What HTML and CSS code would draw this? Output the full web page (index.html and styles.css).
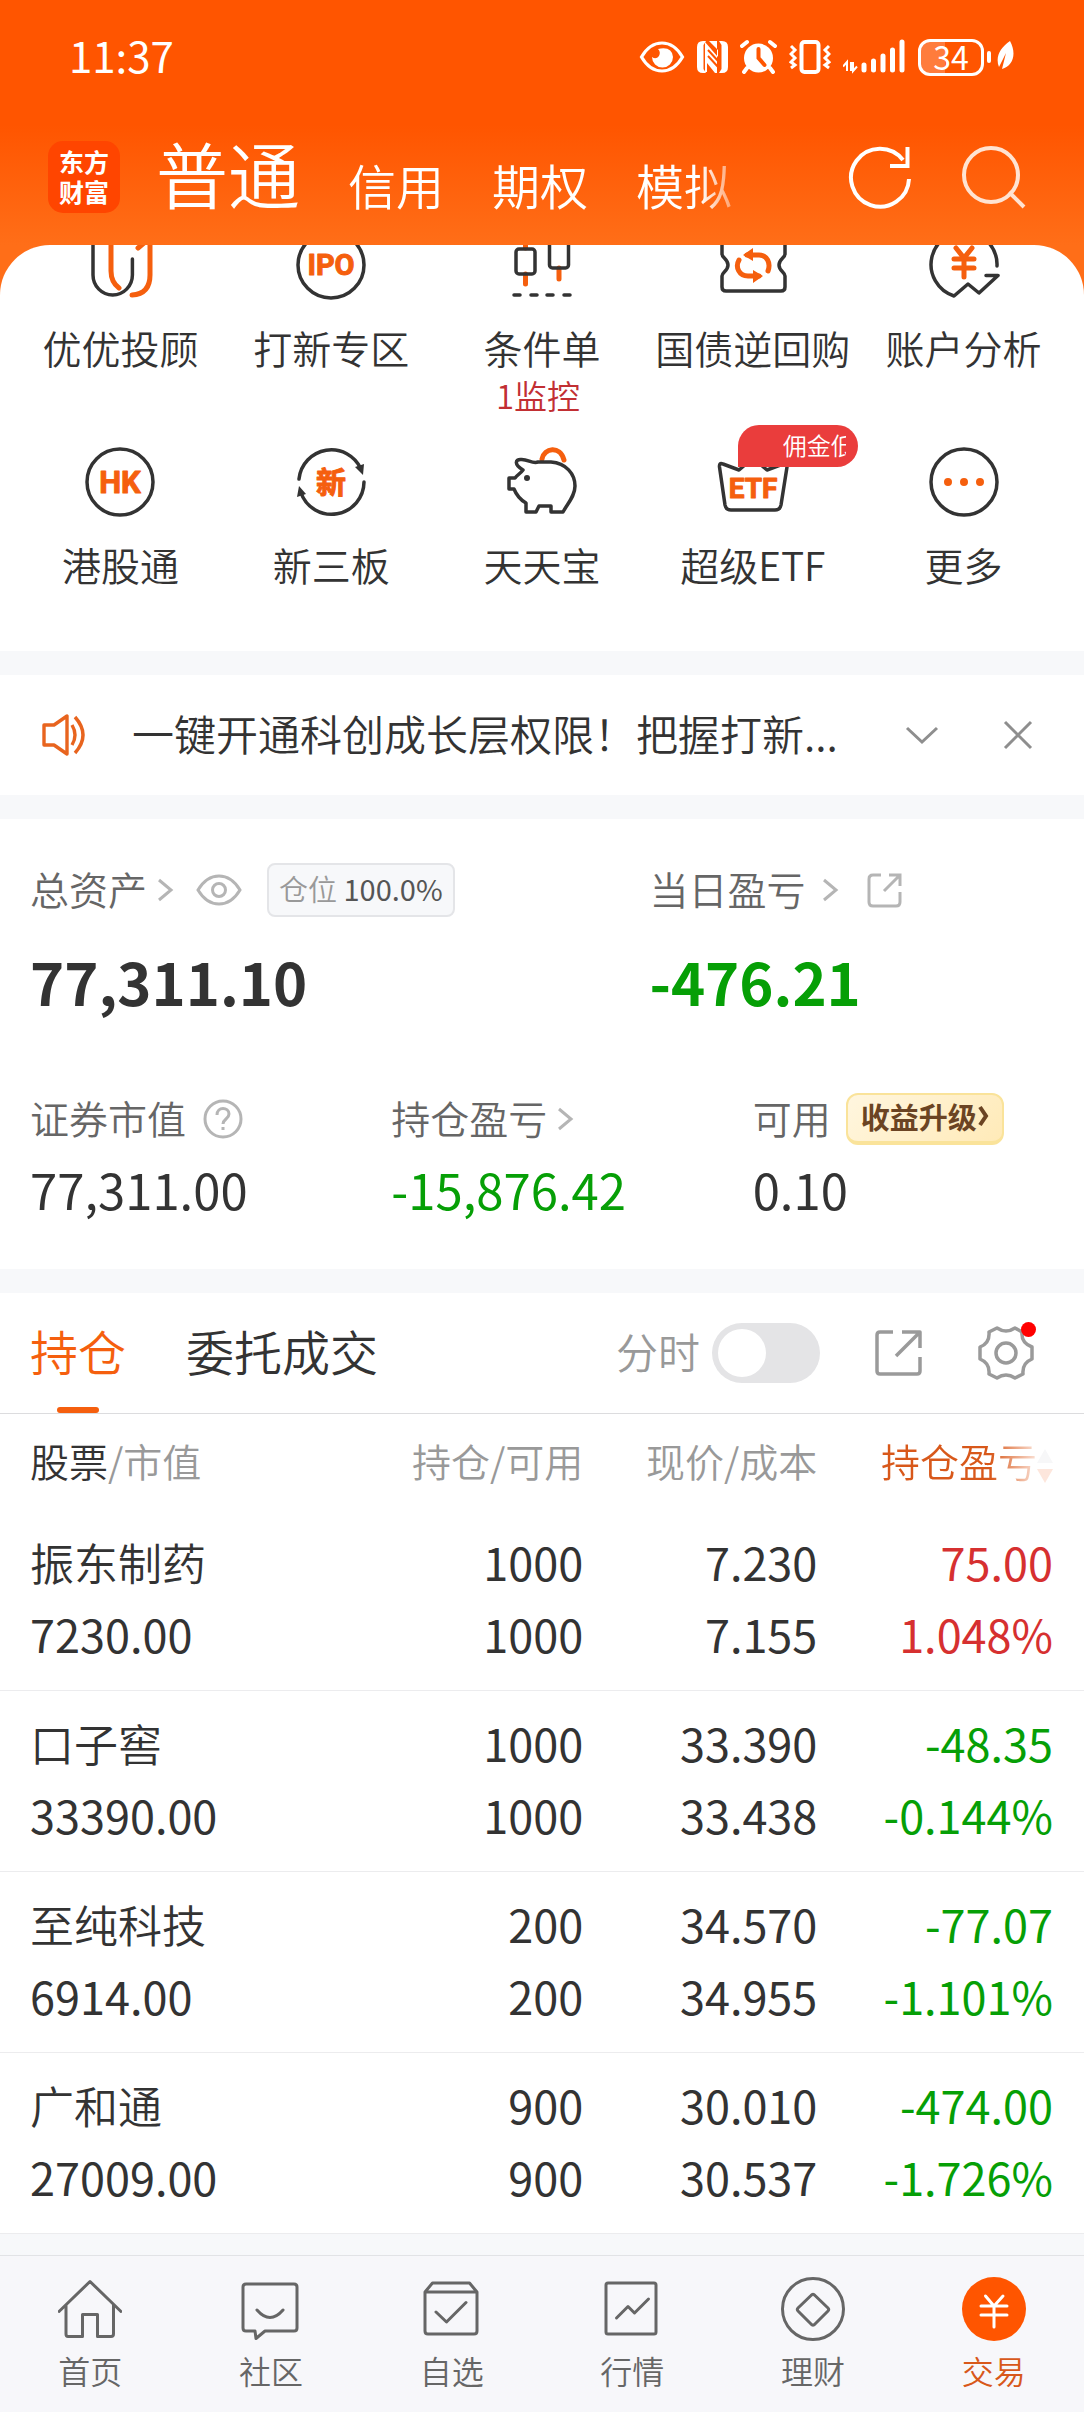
FILE: index.html
```html
<!DOCTYPE html>
<html lang="zh-CN">
<head>
<meta charset="utf-8">
<meta name="viewport" content="width=device-width, initial-scale=1">
<title>交易</title>
<link rel="stylesheet" href="styles.css">
</head>
<body>
<header class="header">
  <div class="status">
    <time class="clock">11:37</time>
    <div class="status-icons">
      <svg width="46" height="44" viewBox="0 0 46 44"><path d="M2.500 22C8 12.500 14.500 8 23 8S38 12.500 43.500 22C38 31.500 31.500 36 23 36S8 31.500 2.500 22Z" fill="none" stroke="#fff" stroke-width="3.200"/><path d="M13 22q4 3 7-1 2-4-1-7 14-3 15 8a10.500 10.500 0 0 1-21 0Z" fill="#fff"/></svg>
      <svg width="31" height="44" viewBox="0 0 31 44"><path d="M6 6H9L6.500 10V34L9 38H6Q0 38 0 32V12Q0 6 6 6ZM25 6H22L24.500 10V34L22 38H25Q31 38 31 32V12Q31 6 25 6ZM8 7L21 22V15L12 6H20V38H18L10 28V37H8Z" fill="#fff"/><path d="M11 15L22 27M11 21L22 33" stroke="#ff5500" stroke-width="2"/></svg>
      <svg width="37" height="44" viewBox="0 0 37 44"><circle cx="18.500" cy="23" r="14.500" fill="#fff"/><path d="M2 11l5-4M35 11l-5-4M7 33l-3 4M30 33l3 4" stroke="#fff" stroke-width="4" stroke-linecap="round"/><path d="M18.500 14v9l6 7" fill="none" stroke="#ff5500" stroke-width="4" stroke-linecap="round"/></svg>
      <svg width="42" height="44" viewBox="0 0 42 44"><rect x="12.500" y="7" width="17" height="30" rx="3" fill="none" stroke="#fff" stroke-width="4"/><path d="M2 11l4 4-4 4 4 4-4 4 4 3-4 3M40 11l-4 4 4 4-4 4 4 4-4 3 4 3" fill="none" stroke="#fff" stroke-width="3"/></svg>
      <svg width="63" height="44" viewBox="0 0 63 44"><path d="M0 31.500L4 27V36M8 27V36M10 27V36L14 31.500" fill="none" stroke="#fff" stroke-width="2"/><path d="M21 30v5M30.500 26v9M40 21v14M49.500 15v20M59 7v28" stroke="#fff" stroke-width="5" stroke-linecap="round"/></svg>
      <div class="battery"><span class="battery-box">34</span><span class="battery-tip"></span></div>
      <svg class="leaf" width="18" height="44" viewBox="0 0 18 44"><path d="M13 6C3 13-2 22 2 32L9 18 5 34C16 31 20 19 13 6Z" fill="#fff"/></svg>
    </div>
  </div>
  <div class="title-bar">
    <div class="logo"><span>东方</span><span>财富</span></div>
    <nav class="accounts">
      <a class="account account-on" href="#">普通</a>
      <a class="account" href="#">信用</a>
      <a class="account" href="#">期权</a>
      <a class="account" href="#">模拟</a>
    </nav>
    <div class="title-actions">
      <button class="icon-btn" aria-label="刷新"><svg width="64" height="64" viewBox="0 0 64 64" fill="none" stroke="#fff" stroke-width="4"><path d="M61 34A29 29 0 1 1 55 15"/><path d="M59.500 2V21H42"/></svg></button>
      <button class="icon-btn" aria-label="搜索"><svg width="66" height="64" viewBox="0 0 66 64" fill="none" stroke="#ffe3d2" stroke-width="4"><circle cx="31" cy="30" r="27"/><path d="M49 47l15 15"/></svg></button>
    </div>
  </div>
</header>

<main>
  <section class="sheet">
    <div class="shortcuts">
      <a class="shortcut" href="#"><svg class="ico" viewBox="0 0 72 72"><path d="M9 6V46a19.700 20 0 0 0 39.400 0V30"/><path class="o" d="M27 6V42Q27 53 35 59M48 66Q66 65 66 46V9L54 19"/></svg><span>优优投顾</span></a>
      <a class="shortcut" href="#"><svg class="ico" viewBox="0 0 72 72"><circle cx="36" cy="36" r="33"/><text class="t" x="36" y="46" font-size="29">IPO</text></svg><span>打新专区</span></a>
      <a class="shortcut" href="#"><svg class="ico" viewBox="0 0 72 72"><path class="o" d="M19.500 8V19M19.500 45V55M53 39V50"/><rect x="10" y="20" width="19" height="25" rx="3"/><rect x="43.500" y="12" width="19" height="27" rx="3"/><path d="M8 66h6M25 66h6M41 66h6M58 66h6"/></svg><span>条件单</span><small>1监控</small></a>
      <a class="shortcut" href="#"><svg class="ico" viewBox="0 0 72 72"><path d="M5 8V25C5 29 11 30 11 36S5 43 5 47V58Q5 62 9 62H64Q68 62 68 58V47C68 43 62 42 62 36S68 29 68 25V8"/><path class="o" d="M30 26H42C50 26 54 34 51 42M42 47H31C22 47 18 38 22 31"/><path class="of" d="M26 26l10-7v13ZM46 47l-10-6v13Z"/></svg><span>国债逆回购</span></a>
      <a class="shortcut" href="#"><svg class="ico" viewBox="0 0 72 72"><path d="M69 37A33 33 0 1 0 26 67L40 55 51 64 70 46.500H58"/><path class="o y" d="M28 19l8 10 8-10M26 30H46M26 39H46M36 30V48"/></svg><span>账户分析</span></a>
      <a class="shortcut" href="#"><svg class="ico" viewBox="0 0 72 72"><circle cx="36" cy="36" r="33"/><text class="t" x="36" y="47" font-size="31">HK</text></svg><span>港股通</span></a>
      <a class="shortcut" href="#"><svg class="ico" viewBox="0 0 72 72"><path d="M4 33A32.500 32.500 0 0 1 66 23M69 36A32.500 32.500 0 0 1 6 47"/><path class="df" d="M60 21L69 18 68 29ZM2 51L11 48 4 40Z"/><text class="t" x="36" y="47" font-size="30">新</text></svg><span>新三板</span></a>
      <a class="shortcut" href="#"><svg class="ico" viewBox="0 0 72 72"><path class="o" d="M36 13C38 2 54 -1 58 14"/><path d="M17 24C8 19 9 13 15 13.500C22 13 26 18 32 16H45C60 17 69 28 69 40C69 50 62 57 57 66H45V60H33L30 66H20V57C13 53 10 48 8 43H3V32H9C11 29 14 28 17 24Z"/><circle class="df" cx="21" cy="32" r="3"/></svg><span>天天宝</span></a>
      <a class="shortcut" href="#"><svg class="ico" viewBox="0 0 72 72"><path d="M22 24L6 18Q2 16 2.500 21L8 59Q9 64 14 64H58Q63 64 64 59L70 21Q70 16 66 18L50 24L36 12Z"/><text class="t" x="36" y="52" font-size="28">ETF</text></svg><span class="badge"><span class="badge-text">佣金低</span></span><span>超级ETF</span></a>
      <a class="shortcut" href="#"><svg class="ico" viewBox="0 0 72 72"><circle cx="36" cy="36" r="33"/><path class="of" d="M16 36a4 4 0 0 1 8 0 4 4 0 0 1-8 0ZM32 36a4 4 0 0 1 8 0 4 4 0 0 1-8 0ZM48 36a4 4 0 0 1 8 0 4 4 0 0 1-8 0Z"/></svg><span>更多</span></a>
    </div>
  </section>

  <section class="notice">
    <svg width="48" height="44" viewBox="0 0 48 44" fill="none" stroke="#e8641e" stroke-width="3.400" stroke-linejoin="round"><path d="M3 12H13L26 3V41L13 32H3Z"/><path d="M31 12Q37 22 31 32M34 4Q50 22 34 40"/></svg>
    <p class="notice-text">一键开通科创成长层权限！把握打新...</p>
    <button class="icon-btn" aria-label="展开"><svg width="36" height="36" viewBox="0 0 36 36" class="line"><path d="M3 11l15 14 15-14"/></svg></button>
    <button class="icon-btn" aria-label="关闭"><svg width="32" height="36" viewBox="0 0 32 36" class="line"><path d="M3 5l26 26M29 5L3 31"/></svg></button>
  </section>

  <section class="assets">
    <div class="totals">
      <div class="cell">
        <div class="label"><span>总资产</span>
          <svg width="18" height="26" viewBox="0 0 18 26" class="line soft"><path d="M3 3l12 10L3 23"/></svg>
          <svg class="eye" width="46" height="36" viewBox="0 0 46 36" fill="none" stroke="#b5b5b5" stroke-width="3"><path d="M2 18C8 8 15 4 23 4S38 8 44 18C38 28 31 32 23 32S8 28 2 18Z"/><circle cx="23" cy="18" r="6.500"/></svg>
          <span class="tag">仓位 <b>100.0%</b></span></div>
        <strong class="big">77,311.10</strong>
      </div>
      <div class="cell">
        <div class="label"><span>当日盈亏</span>
          <svg class="gap-l" width="18" height="26" viewBox="0 0 18 26" fill="none" stroke="#b5b5b5" stroke-width="3"><path d="M3 3l12 10L3 23"/></svg>
          <svg class="share" width="36" height="36" viewBox="0 0 36 36" fill="none" stroke="#b5b5b5" stroke-width="3"><path d="M14 3H6Q2 3 2 7V30Q2 34 6 34H29Q33 34 33 30V20M22 3H33V14M33 3L17 19"/></svg></div>
        <strong class="big down">-476.21</strong>
      </div>
    </div>
    <div class="details">
      <div class="cell">
        <div class="label"><span>证券市值</span>
          <svg class="help" width="40" height="40" viewBox="0 0 40 40" fill="none" stroke="#b5b5b5" stroke-width="3"><circle cx="20" cy="20" r="18"/><path d="M14 16C14 7 26 8 26 15C26 20 20 20 20 25M20 28V31"/></svg></div>
        <span class="num">77,311.00</span>
      </div>
      <div class="cell">
        <div class="label"><span>持仓盈亏</span>
          <svg width="18" height="26" viewBox="0 0 18 26" class="line soft"><path d="M3 3l12 10L3 23"/></svg></div>
        <span class="num down">-15,876.42</span>
      </div>
      <div class="cell">
        <div class="label"><span>可用</span>
          <button class="upgrade">收益升级<svg width="13" height="24" viewBox="0 0 13 24" fill="none" stroke="#6b4423" stroke-width="4"><path d="M3 3l6 9-6 9"/></svg></button></div>
        <span class="num">0.10</span>
      </div>
    </div>
  </section>

  <section class="positions">
    <div class="tabs">
      <button class="tab tab-on">持仓</button>
      <button class="tab">委托成交</button>
      <label class="switch-label" for="minute">分时</label>
      <input class="switch" id="minute" type="checkbox" role="switch">
      <button class="icon-btn tab-share" aria-label="分享"><svg width="48" height="48" viewBox="0 0 48 48" fill="none" stroke="#9a9a9a" stroke-width="3.500" stroke-linejoin="round"><path d="M19 3H6Q3 3 3 6V42Q3 45 6 45H43Q46 45 46 42V28M28 3H46V19M45 4L22 27"/></svg></button>
      <button class="icon-btn gear" aria-label="设置"><svg width="58" height="58" viewBox="0 0 58 58" fill="none" stroke="#9a9a9a" stroke-width="3.500" stroke-linejoin="round"><path d="M20 4Q29 10 38 4L45 8Q44 19 55 23V35Q45 39 46 50L38 54Q29 48 20 54L12 50Q13 39 3 35V23Q13 19 12 8Z"/><circle cx="29" cy="29" r="10"/></svg></button>
    </div>
    <table class="table">
      <colgroup><col class="c1"><col class="c2"><col class="c2"><col></colgroup>
      <thead>
        <tr><th><em>股票</em>/市值</th><th>持仓/可用</th><th>现价/成本</th><th class="sorted"><span class="sort-text">持仓盈亏</span><svg width="16" height="36" viewBox="0 0 16 36"><path d="M0 15L8 1l8 14Z" fill="#f7f7f8"/><path d="M0 21H16L8 35Z" fill="#fde6dc"/></svg></th></tr>
      </thead>
      <tbody>
        <tr><td><span class="name">振东制药</span>7230.00</td><td>1000<br>1000</td><td>7.230<br>7.155</td><td class="up">75.00<br>1.048%</td></tr>
        <tr><td><span class="name">口子窖</span>33390.00</td><td>1000<br>1000</td><td>33.390<br>33.438</td><td class="down">-48.35<br>-0.144%</td></tr>
        <tr><td><span class="name">至纯科技</span>6914.00</td><td>200<br>200</td><td>34.570<br>34.955</td><td class="down">-77.07<br>-1.101%</td></tr>
        <tr><td><span class="name">广和通</span>27009.00</td><td>900<br>900</td><td>30.010<br>30.537</td><td class="down">-474.00<br>-1.726%</td></tr>
      </tbody>
    </table>
  </section>
</main>

<nav class="tabbar">
  <a class="item" href="#"><svg class="nico" viewBox="0 0 64 64"><path d="M1 34.500L32 4.500 63 34.500M8 28V57Q8 59.500 10 59.500H24.500V37.500H39.500V59.500H53Q55.500 59.500 55.500 57V28"/></svg>首页</a>
  <a class="item" href="#"><svg class="nico" viewBox="0 0 64 64"><path d="M7 7H55Q58 7 58 10V51Q58 54 55 54H26L17 61.500 16 54H7Q4 54 4 51V10Q4 7 7 7ZM18 33Q31 48 44 33"/></svg>社区</a>
  <a class="item" href="#"><svg class="nico" viewBox="0 0 64 64"><path d="M5 15L12.500 6H49.500L57 15V54Q57 57 54 57H8Q5 57 5 54ZH57M16 35L26.500 45 46 25.500"/></svg>自选</a>
  <a class="item" href="#"><svg class="nico" viewBox="0 0 64 64"><rect x="6" y="6" width="50" height="51" rx="2"/><path d="M16.500 41L28 29.500 34.500 36 48.500 22"/></svg>行情</a>
  <a class="item" href="#"><svg class="nico" viewBox="0 0 64 64"><circle cx="32" cy="32" r="30.500"/><path d="M30 18.500Q32 16 34 18.500L47 31Q48.500 32.500 47 34L34 47Q32 49.500 30 47L17 34Q15.500 32.500 17 31Z"/></svg>理财</a>
  <a class="item item-on" href="#"><svg class="nico" viewBox="0 0 64 64"><circle class="disc" cx="32" cy="32" r="32"/><path class="yen" d="M23.500 19L32 29 41 19M19 29H45M19 38H45M32 29V50"/></svg>交易</a>
</nav>
</body>
</html>
```

FILE: styles.css
```css
* { box-sizing: border-box; }

body {
  margin: 0;
  background: #f7f8fa;
  color: #333;
  font-family: "Noto Sans CJK SC", sans-serif;
  font-size: 39px;
  font-weight: 350;
}

a { color: inherit; text-decoration: none; }

button {
  border: 0;
  padding: 0;
  background: none;
  color: inherit;
  font: inherit;
}

svg { display: block; flex: none; }

.icon-btn { display: flex; flex: none; }

.line { fill: none; stroke: #8e8e8e; stroke-width: 3; }
.soft { stroke: #b5b5b5; }
.down { color: #069f06; }
.up { color: #d63030; }

/* header */
.header {
  padding: 35px 58px 77px 48px;
  background: linear-gradient(#f50 0, #f50 125px, #ff6e18 245px);
  color: #fff;
}

.status {
  display: flex;
  justify-content: space-between;
  align-items: center;
  height: 44px;
  padding: 0 11px 0 21px;
}

.clock { padding-bottom: 4px; font-size: 42px; font-weight: 400; line-height: 40px; }

.status-icons { display: flex; align-items: center; gap: 12px; }

.battery { display: flex; align-items: center; gap: 3px; }

.battery-box {
  width: 66px;
  height: 37px;
  border: 3px solid #fff;
  border-radius: 12px;
  background: linear-gradient(90deg, #ff7c3c 40%, transparent 40%);
  font-size: 32px;
  font-weight: 400;
  line-height: 28px;
  text-align: center;
}

.battery-tip { width: 4px; height: 12px; border-radius: 2px; background: #fff; }
.leaf { margin-left: -6px; }

.title-bar { display: flex; align-items: center; margin-top: 57px; }

.logo {
  display: flex;
  flex-direction: column;
  align-items: center;
  justify-content: center;
  gap: 4px;
  width: 72px;
  height: 72px;
  padding-bottom: 2px;
  border-radius: 15px;
  background: #ff4500;
  font-size: 25px;
  font-weight: 700;
  line-height: 26px;
}

.accounts {
  display: flex;
  align-items: flex-end;
  gap: 48px;
  margin-left: 36px;
  padding-bottom: 10px;
  -webkit-mask: linear-gradient(270deg, rgba(0, 0, 0, .4), #000 32px);
  mask: linear-gradient(270deg, rgba(0, 0, 0, .4), #000 32px);
}

.account { font-size: 48px; line-height: 48px; white-space: nowrap; }
.account-on { font-size: 72px; line-height: 72px; }

.title-actions { display: flex; gap: 48px; margin-left: auto; }

/* shortcuts */
.sheet {
  margin-top: -50px;
  overflow: hidden;
  border-radius: 50px 50px 0 0;
  background: #fff;
}

.shortcuts {
  display: grid;
  grid-template-columns: repeat(5, 1fr);
  gap: 28px 0;
  margin-top: -16px;
  padding: 0 15px 16px;
}

.shortcut {
  position: relative;
  display: flex;
  flex-direction: column;
  align-items: center;
  min-height: 189px;
  line-height: 50px;
  white-space: nowrap;
}

.shortcut small { padding-right: 8px; font-size: 33px; line-height: 46px; color: #c22f33; }

.ico {
  width: 72px;
  height: 72px;
  margin-bottom: 21px;
  fill: none;
  stroke: #333;
  stroke-width: 3.5;
  stroke-linecap: round;
  stroke-linejoin: round;
}

.ico .o { stroke: #f55f0e; stroke-width: 5; }
.ico .of { fill: #f55f0e; stroke: none; }
.ico .df { fill: #333; stroke: none; }
.ico .t {
  fill: #f55f0e;
  stroke: #f55f0e;
  stroke-width: 1;
  font-family: Roboto, "Noto Sans CJK SC", sans-serif;
  font-weight: 700;
  text-anchor: middle;
}

.badge {
  position: absolute;
  top: -21px;
  left: calc(50% - 15px);
  width: 120px;
  height: 42px;
  padding: 0 12px 0 45px;
  border-radius: 21px 21px 21px 0;
  background: #ea3d3c;
  color: #fff;
  font-size: 24px;
  line-height: 40px;
}

.badge-text { display: block; overflow: hidden; }

/* notice */
.notice {
  display: flex;
  align-items: center;
  height: 120px;
  margin: 24px 0;
  padding: 0 50px 0 41px;
  background: #fff;
}

.notice-text {
  flex: 1;
  margin: 0 20px 4px 43px;
  overflow: hidden;
  font-size: 42px;
  line-height: 60px;
  white-space: nowrap;
}

.notice .icon-btn + .icon-btn { margin-left: 62px; }

/* assets */
.assets { padding: 41px 0 50px; background: #fff; }
.totals { display: grid; grid-template-columns: 4fr 3fr; }
.details { display: grid; grid-template-columns: repeat(3, 1fr); margin-top: 72px; }
.cell { padding-left: 30px; white-space: nowrap; }

.label { display: flex; align-items: center; height: 60px; color: #666; }
.label > span:first-child { line-height: 56px; margin-bottom: 4px; }
.label > span:first-child + .line { margin-left: 9px; }
.eye { margin-left: 22px; }
.gap-l { margin-left: 16px; }
.share { margin-left: 28px; }
.help { margin-left: 17px; }

.tag {
  height: 54px;
  margin-left: 25px;
  padding: 0 10px;
  border: 2px solid #e4e5e8;
  border-radius: 8px;
  background: #f7f8fa;
  color: #999;
  font-size: 29px;
  line-height: 46px;
}

.tag b { color: #555; font-weight: 400; }

.big {
  display: block;
  margin-top: 25px;
  font-size: 58px;
  font-weight: 700;
  line-height: 72px;
}

.num { display: block; margin-top: 10px; font-size: 49px; font-weight: 400; line-height: 60px; }

.upgrade {
  display: flex;
  align-items: center;
  height: 52px;
  margin-left: 15px;
  padding: 0 12px 4px 13px;
  border: 2px solid #fae39a;
  border-bottom-width: 4px;
  border-radius: 12px;
  background: linear-gradient(135deg, #fff6df, #ffeab8);
  color: #6b4423;
  font-size: 29px;
  font-weight: 700;
  line-height: 42px;
}

/* positions */
.positions { margin-top: 24px; background: #fff; }

.tabs {
  display: flex;
  align-items: center;
  height: 121px;
  padding: 0 49px 0 30px;
  border-bottom: 1px solid #dcdcde;
}

.tab { position: relative; height: 120px; padding-bottom: 6px; font-size: 48px; }
.tab + .tab { margin-left: 60px; }
.tab-on { color: #f55f0e; }

.tab-on::after {
  content: "";
  position: absolute;
  bottom: 0;
  left: 50%;
  width: 42px;
  height: 6px;
  margin-left: -21px;
  border-radius: 3px;
  background: #f55f0e;
}

.switch-label { margin-left: auto; padding-bottom: 4px; color: #999; font-size: 42px; line-height: 60px; }

.switch {
  appearance: none;
  flex: none;
  width: 108px;
  height: 60px;
  margin: 0 0 0 12px;
  border-radius: 30px;
  background: #e4e4e6;
}

.switch::before {
  content: "";
  display: block;
  width: 48px;
  height: 48px;
  margin: 6px;
  border-radius: 50%;
  background: #fff;
}

.switch:checked { background: #f55f0e; }
.switch:checked::before { margin-left: 54px; }

.tab-share { margin-left: 54px; }
.gear { position: relative; margin-left: 55px; }

.gear::after {
  content: "";
  position: absolute;
  top: -2px;
  right: -1px;
  width: 15px;
  height: 15px;
  border-radius: 50%;
  background: #f00;
}

.table { width: 100%; table-layout: fixed; border-collapse: collapse; }
.c1 { width: 32.2%; }
.c2 { width: 21.6%; }

th {
  height: 96px;
  padding: 0 0 4px;
  color: #999;
  font-weight: 350;
  line-height: 60px;
  text-align: right;
  white-space: nowrap;
}

th em { color: #333; font-style: normal; }
th:first-child, td:first-child { padding-left: 30px; text-align: left; }
th:last-child, td:last-child { padding-right: 31px; }
th svg { display: inline-block; vertical-align: middle; }

.sort-text {
  background: linear-gradient(90deg, #d8581a 70%, #fbe3d8);
  -webkit-background-clip: text;
  background-clip: text;
  color: transparent;
}

td {
  padding: 16px 0 20px;
  border-bottom: 1px solid #ececee;
  font-size: 45px;
  font-weight: 400;
  line-height: 72px;
  text-align: right;
  white-space: nowrap;
}

.name { display: block; font-size: 44px; font-weight: 350; }

/* bottom bar */
.tabbar {
  display: grid;
  grid-template-columns: repeat(6, 1fr);
  margin-top: 21px;
  padding: 21px 0 21px;
  border-top: 1px solid #e2e3e6;
  background: #f7f7fa;
}

.item {
  display: flex;
  flex-direction: column;
  align-items: center;
  gap: 8px;
  color: #666;
  font-size: 32px;
  line-height: 42px;
}

.item-on { color: #d8581a; }

.nico {
  width: 64px;
  height: 64px;
  fill: none;
  stroke: #666;
  stroke-width: 3;
  stroke-linecap: round;
  stroke-linejoin: round;
}

.nico .disc { fill: #f50; stroke: none; }
.nico .yen { stroke: #fff; }
```
